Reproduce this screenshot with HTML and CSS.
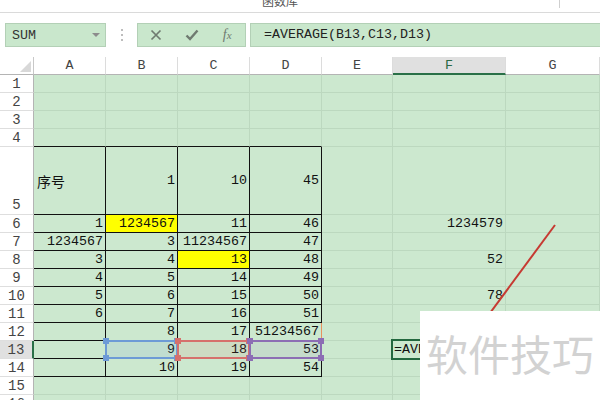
FILE: index.html
```html
<!DOCTYPE html>
<html>
<head>
<meta charset="utf-8">
<link rel="stylesheet" href="styles.css">
</head>
<body>
<div class="app">
  <div class="ribbon"><span class="ribbon-label">函数库</span><span class="ribbon-sep"></span></div>
  <div class="toolbar">
    <div class="namebox"><span>SUM</span><span class="caret"></span></div>
    <div class="grip"><i></i><i></i><i></i></div>
    <div class="fbtns">
      <span class="fbtn"><svg width="12" height="12" viewBox="0 0 12 12"><path d="M1.5 1.5L10.5 10.5M10.5 1.5L1.5 10.5" stroke="#6f7a70" stroke-width="1.7" fill="none"/></svg></span>
      <span class="fbtn"><svg width="14" height="12" viewBox="0 0 14 12"><path d="M1.5 6.5L5 10L12.5 1.5" stroke="#6f7a70" stroke-width="2.4" fill="none"/></svg></span>
      <span class="fbtn fx"><i>f</i><i class="fxx">x</i></span>
    </div>
    <div class="formula">=AVERAGE(B13,C13,D13)</div>
  </div>
  <div class="sheet">
    <div class="corner"><span class="tri"></span></div>
    <div class="colh">A</div><div class="colh">B</div><div class="colh">C</div><div class="colh">D</div><div class="colh">E</div><div class="colh sel">F</div><div class="colh">G</div>

    <div class="rowh">1</div><div class="c"></div><div class="c"></div><div class="c"></div><div class="c"></div><div class="c"></div><div class="c"></div><div class="c"></div>
    <div class="rowh">2</div><div class="c"></div><div class="c"></div><div class="c"></div><div class="c"></div><div class="c"></div><div class="c"></div><div class="c"></div>
    <div class="rowh">3</div><div class="c"></div><div class="c"></div><div class="c"></div><div class="c"></div><div class="c"></div><div class="c"></div><div class="c"></div>
    <div class="rowh">4</div><div class="c tb"></div><div class="c tb"></div><div class="c tb"></div><div class="c tb"></div><div class="c"></div><div class="c"></div><div class="c"></div>

    <div class="rowh tall">5</div><div class="c t left">序号</div><div class="c t">1</div><div class="c t">10</div><div class="c t">45</div><div class="c"></div><div class="c"></div><div class="c"></div>
    <div class="rowh">6</div><div class="c t">1</div><div class="c t y">1234567</div><div class="c t">11</div><div class="c t">46</div><div class="c"></div><div class="c">1234579</div><div class="c"></div>
    <div class="rowh">7</div><div class="c t">1234567</div><div class="c t">3</div><div class="c t">11234567</div><div class="c t">47</div><div class="c"></div><div class="c"></div><div class="c"></div>
    <div class="rowh">8</div><div class="c t">3</div><div class="c t">4</div><div class="c t y">13</div><div class="c t">48</div><div class="c"></div><div class="c">52</div><div class="c"></div>
    <div class="rowh">9</div><div class="c t">4</div><div class="c t">5</div><div class="c t">14</div><div class="c t">49</div><div class="c"></div><div class="c"></div><div class="c"></div>
    <div class="rowh">10</div><div class="c t">5</div><div class="c t">6</div><div class="c t">15</div><div class="c t">50</div><div class="c"></div><div class="c">78</div><div class="c"></div>
    <div class="rowh">11</div><div class="c t">6</div><div class="c t">7</div><div class="c t">16</div><div class="c t">51</div><div class="c"></div><div class="c"></div><div class="c"></div>
    <div class="rowh">12</div><div class="c t"></div><div class="c t">8</div><div class="c t">17</div><div class="c t or">51234567</div><div class="c"></div><div class="c"></div><div class="c"></div>
    <div class="rowh sel">13</div><div class="c t"></div>
    <div class="c t"><span class="ref blue"><b class="h tl"></b><b class="h tr"></b><b class="h bl"></b><b class="h br"></b></span>9</div>
    <div class="c t"><span class="ref red"><b class="h tl"></b><b class="h tr"></b><b class="h bl"></b><b class="h br"></b></span>18</div>
    <div class="c t"><span class="ref purple"><b class="h tl"></b><b class="h tr"></b><b class="h bl"></b><b class="h br"></b></span>53</div>
    <div class="c"></div><div class="c"><div class="edit">=AVERAGE(B13,C13,D13)</div></div><div class="c"></div>
    <div class="rowh">14</div><div class="c t"></div><div class="c t">10</div><div class="c t">19</div><div class="c t">54</div><div class="c"></div><div class="c"></div><div class="c"></div>
    <div class="rowh">15</div><div class="c"></div><div class="c"></div><div class="c"></div><div class="c"></div><div class="c"></div><div class="c"></div><div class="c"></div>
    <div class="rowh">16</div><div class="c"></div><div class="c"></div><div class="c"></div><div class="c"></div><div class="c"></div><div class="c"></div><div class="c"></div>
  </div>
  <svg class="trend" width="600" height="400" viewBox="0 0 600 400"><line x1="555" y1="225" x2="476" y2="332" stroke="#c63a32" stroke-width="2"/></svg>
  <div class="watermark">软件技巧</div>
</div>
</body>
</html>
```

FILE: styles.css
```css
* { box-sizing: border-box; }
body { margin: 0; background: #fff; }
.app {
  position: relative;
  width: 600px;
  height: 400px;
  overflow: hidden;
  font-family: "Liberation Mono", monospace;
  font-size: 13.33px;
  color: #1a1a1a;
}
.ribbon {
  height: 13px;
  border-bottom: 1px solid #dadada;
  display: flex;
  align-items: flex-start;
}
.ribbon-label {
  margin-left: 262px;
  margin-top: -6px;
  font: 12px/14px "Noto Sans CJK SC", sans-serif;
  color: #555;
}
.ribbon-sep {
  margin-left: auto;
  margin-right: 40px;
  width: 1px;
  height: 8px;
  background: #cfcfcf;
}
.toolbar {
  height: 44px;
  padding-top: 10px;
  display: flex;
  align-items: flex-start;
}
.namebox {
  margin-left: 5px;
  width: 101px;
  height: 24px;
  border: 1px solid #b3d0b6;
  background: #c9e7cc;
  display: flex;
  align-items: center;
  padding-left: 6px;
  padding-right: 5px;
  color: #333;
}
.caret {
  margin-left: auto;
  width: 0;
  height: 0;
  border-left: 4px solid transparent;
  border-right: 4px solid transparent;
  border-top: 4px solid #8c8c8c;
}
.grip {
  width: 31px;
  height: 24px;
  display: flex;
  flex-direction: column;
  align-items: center;
  justify-content: center;
  gap: 3px;
}
.grip i {
  display: block;
  width: 2px;
  height: 2px;
  background: #bdbdbd;
}
.fbtns {
  width: 109px;
  height: 24px;
  border: 1px solid #b3d0b6;
  background: #c9e7cc;
  display: flex;
  align-items: center;
}
.fbtn {
  width: 36px;
  display: flex;
  justify-content: center;
  align-items: center;
}
.fx {
  font-family: "Liberation Serif", serif;
  color: #6f7a70;
  font-size: 14px;
}
.fxx { font-size: 11px; }
.formula {
  margin-left: 4px;
  flex: 1;
  height: 24px;
  border: 1px solid #b3d0b6;
  border-right: none;
  background: #c9e7cc;
  padding-left: 13px;
  line-height: 22px;
  color: #222;
  white-space: nowrap;
}
.sheet {
  display: grid;
  grid-template-columns: 34px 72px 72px 72px 72px 71px 113px 94px;
  grid-template-rows: 18px repeat(4, 18px) 68px repeat(11, 18px);
}
.corner {
  background: #fff;
  border-right: 1px solid #c8c8c8;
  border-bottom: 1px solid #b4b4b4;
  display: flex;
  justify-content: flex-end;
  align-items: flex-end;
  padding: 0 2px 2px 0;
}
.tri {
  width: 0;
  height: 0;
  border-left: 11px solid transparent;
  border-bottom: 11px solid #d8d8d8;
}
.colh {
  background: #fff;
  border-right: 1px solid #dcdcdc;
  border-bottom: 1px solid #b4b4b4;
  display: flex;
  align-items: center;
  justify-content: center;
  color: #444;
}
.colh.sel {
  background: #e0e0e0;
  border-bottom: 2px solid #2a7048;
  color: #2a6a45;
}
.rowh {
  background: #fff;
  border-right: 1px solid #b4b4b4;
  border-bottom: 1px solid #dedede;
  display: flex;
  align-items: center;
  justify-content: center;
  color: #444;
  font-size: 14px;
}
.rowh.tall { align-items: flex-end; padding-bottom: 1px; }
.rowh.sel {
  background: #e0e0e0;
  border-right: 2px solid #2a7048;
}
.c {
  position: relative;
  background: #cce8cf;
  border-right: 1px solid #bcd8bf;
  border-bottom: 1px solid #bcd8bf;
  display: flex;
  align-items: center;
  justify-content: flex-end;
  padding-right: 2px;
  white-space: nowrap;
  color: #111;
}
.c.t { border-right-color: #111; border-bottom-color: #111; }
.c.tb { border-bottom-color: #111; }
.c.y { background: #ffff00; }
.c.or { border-right-color: #e8915f; }
.c.left {
  justify-content: flex-start;
  padding-left: 3px;
  font-family: "Noto Sans CJK SC", sans-serif;
  font-size: 14px;
}
.ref {
  position: absolute;
  left: -1px;
  top: -1px;
  right: -1px;
  bottom: -1px;
  border: 2px solid;
  z-index: 1;
}
.ref.blue { border-color: #6d9ad6; background: rgba(110, 150, 220, 0.12); }
.ref.red { border-color: #d6706c; background: rgba(220, 110, 100, 0.10); }
.ref.purple { border-color: #8c6db4; background: rgba(140, 110, 180, 0.10); }
.h {
  position: absolute;
  width: 6px;
  height: 6px;
  background: inherit;
}
.ref.blue .h { background: #6d9ad6; }
.ref.red .h { background: #d6706c; }
.ref.purple .h { background: #8c6db4; }
.h.tl { left: -4px; top: -4px; }
.h.tr { right: -4px; top: -4px; }
.h.bl { left: -4px; bottom: -4px; }
.h.br { right: -4px; bottom: -4px; }
.c .ref + * { position: relative; }
.edit {
  position: absolute;
  left: -2px;
  top: -2px;
  width: 200px;
  height: 21px;
  border: 2px solid #23683f;
  background: #cce8cf;
  padding-left: 1px;
  line-height: 17px;
  z-index: 3;
  color: #111;
}
.trend {
  position: absolute;
  left: 0;
  top: 0;
  z-index: 4;
  pointer-events: none;
}
.watermark {
  position: absolute;
  left: 420px;
  top: 311px;
  width: 180px;
  height: 89px;
  background: #fff;
  z-index: 5;
  padding: 21px 0 0 6px;
  font-family: "Noto Sans CJK SC", sans-serif;
  font-size: 42px;
  line-height: 1;
  color: #d2d2d2;
  white-space: nowrap;
}
```
